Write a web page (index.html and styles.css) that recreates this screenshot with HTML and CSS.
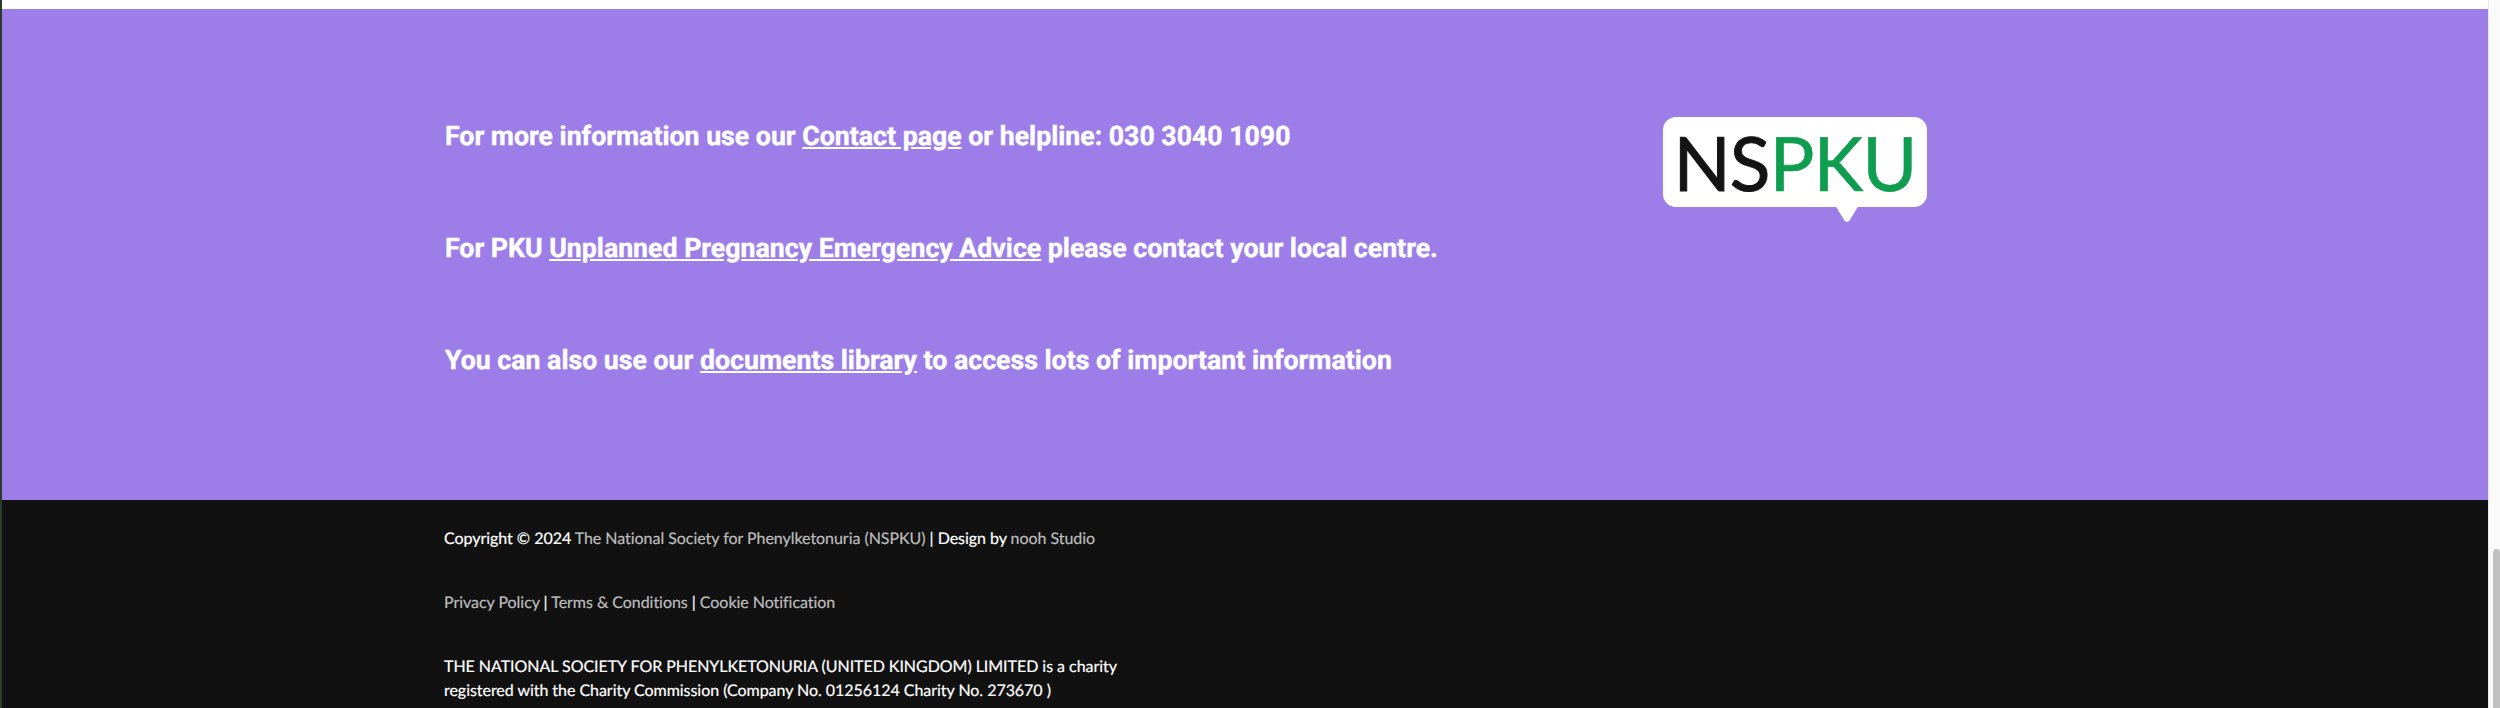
FILE: index.html
```html
<!DOCTYPE html>
<html lang="en">
<head>
<meta charset="utf-8">
<title>NSPKU footer</title>
<link rel="stylesheet" href="styles.css">
</head>
<body>
<div class="edge"></div>
<main class="page">
  <div class="top-strip"></div>
  <section class="info">
    <div class="info-text">
      <p class="info-line">For more information use our <a href="#">Contact page</a> or helpline: 030 3040 1090</p>
      <p class="info-line">For PKU <a href="#">Unplanned Pregnancy Emergency Advice</a> please contact your local centre.</p>
      <p class="info-line">You can also use our <a href="#">documents library</a> to access lots of important information</p>
    </div>
    <div class="logo"><span class="logo-ns">NS</span><span class="logo-pku">PKU</span></div>
  </section>
  <footer class="footer">
    <p class="foot-line">Copyright © 2024 <a href="#">The National Society for Phenylketonuria (NSPKU)</a> | Design by <a href="#">nooh Studio</a></p>
    <p class="foot-line"><a href="#">Privacy Policy</a> | <a href="#">Terms &amp; Conditions</a> | <a href="#">Cookie Notification</a></p>
    <p class="foot-line foot-charity">THE NATIONAL SOCIETY FOR PHENYLKETONURIA (UNITED KINGDOM) LIMITED is a charity registered with the Charity Commission (Company No. 01256124 Charity No. 273670 )</p>
  </footer>
</main>
<div class="scrollbar"><div class="thumb"></div></div>
</body>
</html>
```
FILE: styles.css
```css
* { box-sizing: border-box; }
html, body { margin: 0; height: 708px; overflow: hidden; }
body { display: flex; background: #fafafa; text-rendering: geometricPrecision; }
.edge { width: 2px; background: #2e3a2a; flex: none; }
.page { width: 2486px; flex: none; display: flex; flex-direction: column; height: 708px; overflow: hidden; }
.top-strip { height: 9px; background: #fff; flex: none; }
.info { height: 491px; flex: none; background: #9d7ee8; padding: 0 0 0 443px; display: flex; align-items: flex-start; }
.info-text { width: 1218px; padding-top: 109px; flex: none; }
.info-line { margin: 0 0 76px; font: 700 26.7px/36px Roboto, sans-serif; color: #fff; -webkit-text-stroke: 0.4px #fff; }
.info-line a { color: #fff; text-decoration: underline; }
.logo { position: relative; width: 264px; height: 90px; margin-top: 108px; background: #fff; border-radius: 13px; display: flex; justify-content: center; align-items: center; font: 400 75px/1 Lato, sans-serif; letter-spacing: -1px; }
.logo::after { content: ""; position: absolute; left: 172px; top: 88px; width: 24px; height: 17px; background: #fff; clip-path: polygon(0 0, 100% 0, 60% 92%, 50% 100%, 40% 92%); }
.logo-ns { color: #141414; -webkit-text-stroke: 1px #141414; }
.logo-pku { color: #0f9d4f; -webkit-text-stroke: 0.6px #0f9d4f; }
.footer { flex: 1; background: #111; padding: 27px 0 0 442px; }
.foot-line { margin: 0 0 40px; width: 700px; font: 400 16px/24px Lato, sans-serif; color: #fff; letter-spacing: -0.04px; -webkit-text-stroke: 0.2px currentColor; }
.foot-line a { color: #bdbdbd; text-decoration: none; }
.scrollbar { flex: 1; position: relative; background: #fafafa; border-left: 1px solid #e8e8e8; }
.thumb { position: absolute; right: 0; top: 549px; bottom: 0; width: 7px; background: #c1c1c1; border-radius: 4px 4px 0 0; }
```
